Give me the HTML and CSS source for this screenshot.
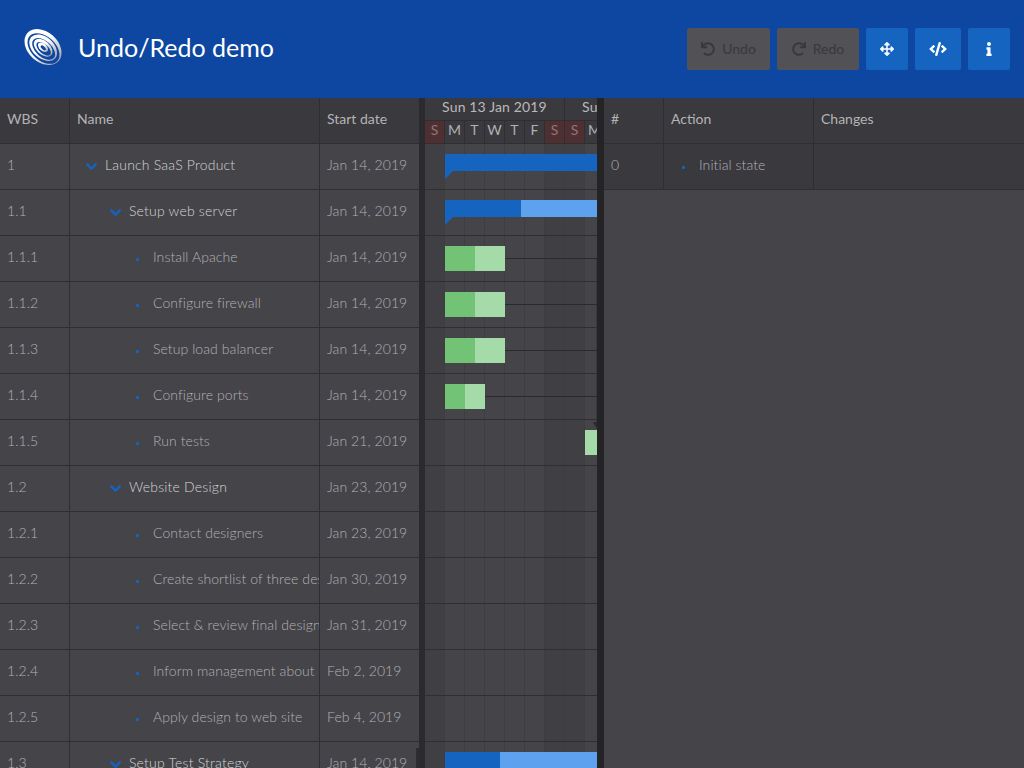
FILE: index.html
```html
<!DOCTYPE html>
<html lang="en">
<head>
    <meta charset="UTF-8">
    <meta name="viewport" content="width=device-width, initial-scale=1.0">
    <title>Undo/Redo demo</title>
    <link rel="stylesheet" href="styles.css">
</head>
<body>
    <svg class="icon-defs" width="0" height="0">
        <symbol id="i-undo" viewBox="0 0 512 512"><path d="M212.333 224.333H12c-6.627 0-12-5.373-12-12V12C0 5.373 5.373 0 12 0h48c6.627 0 12 5.373 12 12v78.112C117.773 39.279 184.26 7.47 258.175 8.007c136.906.994 246.448 111.623 246.157 248.532C504.041 393.258 393.12 504 256.333 504c-64.089 0-122.496-24.313-166.51-64.215-5.099-4.622-5.334-12.554-.467-17.42l33.967-33.967c4.474-4.474 11.662-4.717 16.401-.525C170.76 415.336 211.58 432 256.333 432c97.268 0 176-78.716 176-176 0-97.267-78.716-176-176-176-58.496 0-110.28 28.476-142.274 72.333h98.274c6.627 0 12 5.373 12 12v48c0 6.627-5.373 12-12 12z"/></symbol>
        <symbol id="i-redo" viewBox="0 0 512 512"><path d="M500.33 0h-47.41a12 12 0 0 0-12 12.57l4 82.76A247.42 247.42 0 0 0 256 8C119.34 8 7.9 119.53 8 256.19 8.1 393.07 119.1 504 256 504a247.1 247.1 0 0 0 166.18-63.91 12 12 0 0 0 .48-17.43l-34-34a12 12 0 0 0-16.38-.55A176 176 0 1 1 402.1 157.8l-101.53-4.87a12 12 0 0 0-12.57 12v47.41a12 12 0 0 0 12 12h200.33a12 12 0 0 0 12-12V12a12 12 0 0 0-12-12z"/></symbol>
        <symbol id="i-move" viewBox="0 0 512 512"><path d="M352.201 425.775l-79.196 79.196c-9.373 9.373-24.568 9.373-33.941 0l-79.196-79.196c-15.119-15.119-4.411-40.971 16.971-40.97h51.162L228 284H127.196v51.162c0 21.382-25.851 32.09-40.971 16.971L7.029 272.937c-9.373-9.373-9.373-24.569 0-33.941L86.225 159.8c15.119-15.119 40.971-4.411 40.971 16.971V228H228V127.196h-51.23c-21.382 0-32.09-25.851-16.971-40.971l79.196-79.196c9.373-9.373 24.568-9.373 33.941 0l79.196 79.196c15.119 15.119 4.411 40.971-16.971 40.971h-51.162V228h100.804v-51.162c0-21.382 25.851-32.09 40.97-16.971l79.196 79.196c9.373 9.373 9.373 24.569 0 33.941L425.773 352.2c-15.119 15.119-40.971 4.411-40.97-16.971V284H284v100.804h51.23c21.382 0 32.09 25.851 16.971 40.971z"/></symbol>
        <symbol id="i-code" viewBox="0 0 640 512"><path d="M278.9 511.5l-61-17.7c-6.4-1.8-10-8.5-8.2-14.9L346.2 8.7c1.8-6.4 8.5-10 14.9-8.2l61 17.7c6.4 1.8 10 8.5 8.2 14.9L293.8 503.3c-1.9 6.4-8.5 10.1-14.9 8.2zm-114-112.2l43.5-46.4c4.6-4.9 4.3-12.7-.8-17.2L117 256l90.6-79.7c5.1-4.5 5.5-12.3.8-17.2l-43.5-46.4c-4.5-4.8-12.1-5.1-17-.5L3.8 247.2c-5.1 4.7-5.1 12.8 0 17.5l144.1 135.1c4.9 4.6 12.5 4.4 17-.5zm327.2.6l144.1-135.1c5.1-4.7 5.1-12.8 0-17.5L492.1 112.1c-4.8-4.5-12.4-4.3-17 .5L431.6 159c-4.6 4.9-4.3 12.7.8 17.2L523 256l-90.6 79.7c-5.1 4.5-5.5 12.3-.8 17.2l43.5 46.4c4.5 4.9 12.1 5.1 17 .6z"/></symbol>
        <symbol id="i-info" viewBox="0 0 192 512"><path d="M20 424.229h20V279.771H20c-11.046 0-20-8.954-20-20V212c0-11.046 8.954-20 20-20h112c11.046 0 20 8.954 20 20v212.229h20c11.046 0 20 8.954 20 20V492c0 11.046-8.954 20-20 20H20c-11.046 0-20-8.954-20-20v-47.771c0-11.046 8.954-20 20-20zM96 0C56.235 0 24 32.235 24 72s32.235 72 72 72 72-32.235 72-72S135.764 0 96 0z"/></symbol>
        <symbol id="i-chevron" viewBox="0 0 448 512"><path d="M207.029 381.476L12.686 187.132c-9.373-9.373-9.373-24.569 0-33.941l22.667-22.667c9.357-9.357 24.522-9.375 33.901-.04L224 284.505l154.745-154.021c9.379-9.335 24.544-9.317 33.901.04l22.667 22.667c9.373 9.373 9.373 24.569 0 33.941L240.971 381.476c-9.373 9.372-24.569 9.372-33.942 0z"/></symbol>
    </svg>

    <header class="app-header">
        <svg class="logo" viewBox="0 0 36 36">
            <defs>
                <linearGradient id="logoFade" x1="0" y1="0" x2="1" y2="0">
                    <stop offset="0.45" stop-color="#ffffff"/>
                    <stop offset="1" stop-color="#a4a7ae"/>
                </linearGradient>
            </defs>
            <g transform="rotate(42 18 18)">
                <ellipse cx="18" cy="18" rx="21" ry="15" fill="url(#logoFade)"/>
                <ellipse cx="19.4" cy="18.8" rx="18.6" ry="12" fill="#0d47a1"/>
                <ellipse cx="18.6" cy="18.4" rx="16" ry="10.6" fill="url(#logoFade)"/>
                <ellipse cx="19.8" cy="19" rx="13.6" ry="8" fill="#0d47a1"/>
                <ellipse cx="18.6" cy="18.4" rx="11" ry="6.8" fill="url(#logoFade)"/>
                <ellipse cx="19.6" cy="18.9" rx="8.8" ry="4.6" fill="#0d47a1"/>
                <ellipse cx="18.2" cy="18.2" rx="6" ry="3.6" fill="url(#logoFade)"/>
                <ellipse cx="18.8" cy="18.5" rx="3.2" ry="1.6" fill="#0d47a1"/>
            </g>
        </svg>
        <h1 class="app-title">Undo/Redo demo</h1>
        <div class="toolbar">
            <button class="btn btn-text" disabled><svg class="btn-icon"><use href="#i-undo"/></svg>Undo</button>
            <button class="btn btn-text btn-redo" disabled><svg class="btn-icon"><use href="#i-redo"/></svg>Redo</button>
            <button class="btn btn-move"><svg class="btn-icon"><use href="#i-move"/></svg></button>
            <button class="btn btn-code"><svg class="btn-icon btn-icon-wide"><use href="#i-code"/></svg></button>
            <button class="btn btn-move"><svg class="btn-icon"><use href="#i-info"/></svg></button>
        </div>
    </header>

    <main class="panels">
        <section class="grid grid-tasks">
            <div class="row row-head">
                <div class="cell col-wbs">WBS</div>
                <div class="cell col-name">Name</div>
                <div class="cell col-date">Start date</div>
            </div>
            <div class="row parent">
                <div class="cell col-wbs">1</div>
                <div class="cell col-name lvl-0"><svg class="chevron"><use href="#i-chevron"/></svg>Launch SaaS Product</div>
                <div class="cell col-date">Jan 14, 2019</div>
            </div>
            <div class="row parent">
                <div class="cell col-wbs">1.1</div>
                <div class="cell col-name lvl-1"><svg class="chevron"><use href="#i-chevron"/></svg>Setup web server</div>
                <div class="cell col-date">Jan 14, 2019</div>
            </div>
            <div class="row">
                <div class="cell col-wbs">1.1.1</div>
                <div class="cell col-name lvl-2"><span class="dot"></span>Install Apache</div>
                <div class="cell col-date">Jan 14, 2019</div>
            </div>
            <div class="row">
                <div class="cell col-wbs">1.1.2</div>
                <div class="cell col-name lvl-2"><span class="dot"></span>Configure firewall</div>
                <div class="cell col-date">Jan 14, 2019</div>
            </div>
            <div class="row">
                <div class="cell col-wbs">1.1.3</div>
                <div class="cell col-name lvl-2"><span class="dot"></span>Setup load balancer</div>
                <div class="cell col-date">Jan 14, 2019</div>
            </div>
            <div class="row">
                <div class="cell col-wbs">1.1.4</div>
                <div class="cell col-name lvl-2"><span class="dot"></span>Configure ports</div>
                <div class="cell col-date">Jan 14, 2019</div>
            </div>
            <div class="row">
                <div class="cell col-wbs">1.1.5</div>
                <div class="cell col-name lvl-2"><span class="dot"></span>Run tests</div>
                <div class="cell col-date">Jan 21, 2019</div>
            </div>
            <div class="row parent">
                <div class="cell col-wbs">1.2</div>
                <div class="cell col-name lvl-1"><svg class="chevron"><use href="#i-chevron"/></svg>Website Design</div>
                <div class="cell col-date">Jan 23, 2019</div>
            </div>
            <div class="row">
                <div class="cell col-wbs">1.2.1</div>
                <div class="cell col-name lvl-2"><span class="dot"></span>Contact designers</div>
                <div class="cell col-date">Jan 23, 2019</div>
            </div>
            <div class="row">
                <div class="cell col-wbs">1.2.2</div>
                <div class="cell col-name lvl-2"><span class="dot"></span>Create shortlist of three designers</div>
                <div class="cell col-date">Jan 30, 2019</div>
            </div>
            <div class="row">
                <div class="cell col-wbs">1.2.3</div>
                <div class="cell col-name lvl-2"><span class="dot"></span>Select &amp; review final design</div>
                <div class="cell col-date">Jan 31, 2019</div>
            </div>
            <div class="row">
                <div class="cell col-wbs">1.2.4</div>
                <div class="cell col-name lvl-2"><span class="dot"></span>Inform management about</div>
                <div class="cell col-date">Feb 2, 2019</div>
            </div>
            <div class="row">
                <div class="cell col-wbs">1.2.5</div>
                <div class="cell col-name lvl-2"><span class="dot"></span>Apply design to web site</div>
                <div class="cell col-date">Feb 4, 2019</div>
            </div>
            <div class="row parent">
                <div class="cell col-wbs">1.3</div>
                <div class="cell col-name lvl-1"><svg class="chevron"><use href="#i-chevron"/></svg>Setup Test Strategy</div>
                <div class="cell col-date">Jan 14, 2019</div>
            </div>
        </section>

        <div class="splitter"><span class="splitter-tab"></span></div>

        <section class="chart">
            <div class="chart-head">
                <div class="weeks">
                    <div class="week">Sun 13 Jan 2019</div>
                    <div class="week">Sun 20 Jan 2019</div>
                </div>
                <div class="days">
                    <div class="day weekend">S</div>
                    <div class="day">M</div>
                    <div class="day">T</div>
                    <div class="day">W</div>
                    <div class="day">T</div>
                    <div class="day">F</div>
                    <div class="day weekend">S</div>
                    <div class="day weekend">S</div>
                    <div class="day">M</div>
                </div>
            </div>
            <div class="chart-body">
                <div class="chart-row">
                    <div class="summary"><span class="fill fill-full"></span></div>
                </div>
                <div class="chart-row">
                    <div class="summary"><span class="fill fill-half"></span></div>
                </div>
                <div class="chart-row">
                    <div class="task task-60"><span class="done"></span></div><span class="dep"></span>
                </div>
                <div class="chart-row">
                    <div class="task task-60"><span class="done"></span></div><span class="dep"></span>
                </div>
                <div class="chart-row">
                    <div class="task task-60"><span class="done"></span></div><span class="dep"></span>
                </div>
                <div class="chart-row">
                    <div class="task task-40"><span class="done"></span></div><span class="dep"></span>
                </div>
                <div class="chart-row">
                    <div class="task task-late"></div>
                </div>
                <div class="chart-row"></div>
                <div class="chart-row"></div>
                <div class="chart-row"></div>
                <div class="chart-row"></div>
                <div class="chart-row"></div>
                <div class="chart-row"></div>
                <div class="chart-row">
                    <div class="summary summary-last"><span class="fill"></span></div>
                </div>
                <span class="dep-drop"></span>
                <span class="dep-arrow"></span>
            </div>
        </section>

        <div class="splitter"></div>

        <section class="grid grid-actions">
            <div class="row row-head">
                <div class="cell col-num">#</div>
                <div class="cell col-action">Action</div>
                <div class="cell col-changes">Changes</div>
            </div>
            <div class="row row-state">
                <div class="cell col-num">0</div>
                <div class="cell col-action"><span class="dot"></span>Initial state</div>
                <div class="cell col-changes"></div>
            </div>
        </section>
    </main>
</body>
</html>
```

FILE: styles.css
```css
* {
    box-sizing: border-box;
}

html,
body {
    height: 100%;
}

body {
    margin: 0;
    display: flex;
    flex-direction: column;
    overflow: hidden;
    font-family: Lato, "Open Sans", sans-serif;
    font-size: 14px;
    background-color: #454449;
    color: #b8b8ba;
}

.icon-defs {
    position: absolute;
}

/* header */
.app-header {
    flex: none;
    height: 98px;
    display: flex;
    align-items: center;
    padding: 0 14px 0 25px;
    background-color: #0d47a1;
}

.logo {
    width: 36px;
    height: 36px;
    margin: 0 17px 4px 0;
    overflow: visible;
}

.app-title {
    margin: 0 0 5px;
    font-size: 25px;
    font-weight: 400;
    color: #fff;
}

.toolbar {
    margin-left: auto;
    display: flex;
    gap: 7px;
}

.btn {
    height: 42px;
    display: flex;
    align-items: center;
    justify-content: center;
    padding: 0;
    border: none;
    border-radius: 2px;
    background-color: #1565c0;
    color: #fff;
    font-family: inherit;
    font-size: 14px;
}

.btn:disabled {
    padding-bottom: 1px;
    background-color: #515156;
    color: #39383d;
}

.btn-text {
    width: 83px;
    gap: 7px;
}

.btn-redo {
    width: 82px;
}

.btn-move {
    width: 42px;
}

.btn-code {
    width: 46px;
}

.btn-icon {
    width: 14px;
    height: 14px;
    fill: currentColor;
}

.btn-icon-wide {
    width: 18px;
}

/* panels */
.panels {
    flex: 1;
    min-height: 0;
    display: flex;
}

.splitter {
    flex: none;
    position: relative;
    background-color: #2b2a2e;
}

.grid-tasks + .splitter {
    width: 6px;
}

.chart + .splitter {
    width: 7px;
    background-color: #242426;
}

.splitter-tab {
    position: absolute;
    top: 650px;
    right: 6px;
    width: 3px;
    height: 30px;
    background-color: #2d2c30;
}

.grid {
    overflow: hidden;
}

.grid-tasks {
    flex: none;
    width: 419px;
}

.grid-actions {
    flex: 1;
}

.row {
    height: 46px;
    display: flex;
    border-bottom: 1px solid #2f2e33;
}

.row-head,
.row-state {
    background-color: #3a393e;
}

.cell {
    flex: none;
    display: flex;
    align-items: center;
    padding: 0 0 4px 7px;
    border-right: 1px solid #2f2e33;
    white-space: nowrap;
    overflow: hidden;
    font-weight: 300;
    letter-spacing: 0.08px;
    color: #b2b2b5;
}

.row-head .cell {
    font-weight: 400;
    letter-spacing: 0;
    color: #b4b4b6;
}

.parent .col-name {
    letter-spacing: 0.2px;
    color: #d4d4d6;
}

.col-wbs {
    width: 70px;
}

.col-name {
    width: 250px;
}

.col-date {
    width: 99px;
    border-right: none;
}

.col-num {
    width: 60px;
}

.col-action {
    width: 150px;
}

.col-changes {
    flex: 1;
    border-right: none;
}

.lvl-0 {
    padding-left: 16px;
}

.lvl-1 {
    padding-left: 40px;
}

.lvl-2 {
    padding-left: 66px;
}

.chevron {
    flex: none;
    width: 11px;
    height: 13px;
    margin: 3px 8px 0 0;
    fill: #1565c0;
    stroke: #1565c0;
    stroke-width: 30;
}

.dot {
    flex: none;
    width: 3px;
    height: 3px;
    margin: 5px 14px 0 0;
    border-radius: 1px;
    background-color: #1565c0;
}

.col-action .dot {
    margin-left: 11px;
}

/* gantt chart */
.chart {
    flex: none;
    width: 172px;
    overflow: hidden;
}

.chart-head {
    height: 46px;
    background-color: #3a393e;
    border-bottom: 1px solid #2f2e33;
}

.weeks,
.days {
    display: flex;
}

.weeks {
    height: 23px;
}

.week {
    flex: none;
    width: 140px;
    display: flex;
    align-items: center;
    justify-content: center;
    padding-bottom: 5px;
    border-right: 1px solid #2f2e33;
    border-bottom: 1px solid #2f2e33;
    letter-spacing: 0.15px;
    color: #b9b9bb;
    white-space: nowrap;
}

.days {
    height: 22px;
}

.day {
    flex: none;
    width: 20px;
    display: flex;
    align-items: center;
    justify-content: center;
    padding-bottom: 5px;
    border-right: 1px solid #2f2e33;
    color: #b0b0b3;
}

.weekend {
    background-color: #4e3033;
    color: #8f7679;
}

.chart-body {
    position: relative;
    isolation: isolate;
    height: 640px;
    background-color: #454449;
    background-image:
        repeating-linear-gradient(90deg, transparent 0 19px, #3e3d42 19px 20px),
        linear-gradient(90deg, #403f43 0 20px, transparent 20px 120px, #403f43 120px 160px, transparent 160px);
}

.chart-row {
    height: 46px;
    display: flex;
    padding: 10px 0 0 20px;
    border-bottom: 1px solid #2f2e33;
}

.summary {
    position: relative;
    flex: 1;
    height: 17px;
    background-color: #1565c0;
}

.summary::after {
    content: "";
    position: absolute;
    top: 100%;
    left: 0;
    border-top: 8px solid #1565c0;
    border-right: 8px solid transparent;
}

.summary .fill {
    display: block;
    height: 100%;
    margin-left: 76px;
    background-color: #5ea1ef;
}

.summary .fill-full {
    display: none;
}

.summary-last {
    height: 30px;
}

.summary-last .fill {
    margin-left: 55px;
}

.task {
    flex: none;
    height: 25px;
    display: flex;
    background-color: #a5dba8;
}

.task .done {
    width: 50%;
    background-color: #72c376;
}

.task-60 {
    width: 60px;
}

.task-40 {
    width: 40px;
}

.task-late {
    width: 12px;
    margin-left: 140px;
}

.dep {
    flex: 1;
    height: 1px;
    margin-top: 12px;
    background-color: #2a292c;
}

.dep-drop {
    position: absolute;
    z-index: -1;
    top: 114px;
    right: 0;
    width: 1px;
    height: 164px;
    background-color: #3a393d;
}

.dep-arrow {
    position: absolute;
    top: 278px;
    right: -4px;
    border-top: 7px solid #2a292c;
    border-left: 4px solid transparent;
    border-right: 4px solid transparent;
}
```
